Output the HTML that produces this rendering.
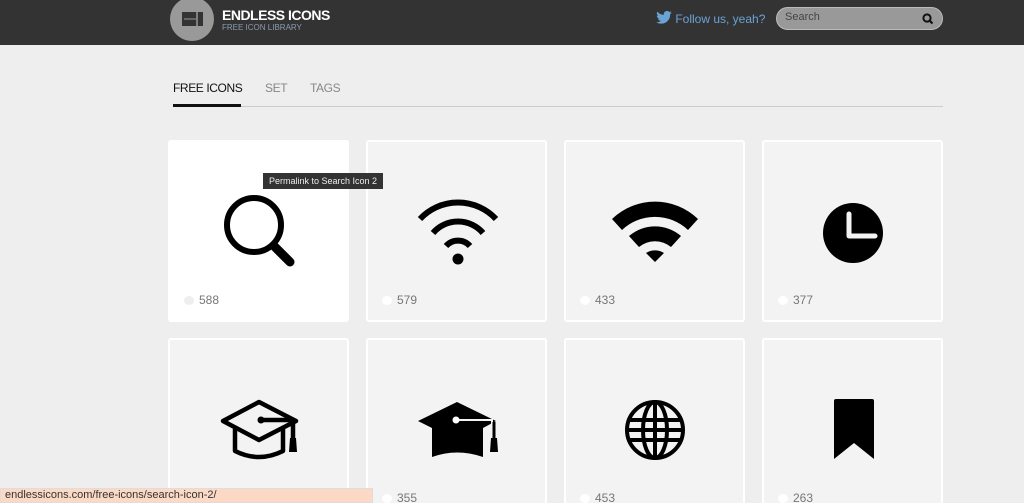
<!DOCTYPE html>
<html><head><meta charset="utf-8"><style>
*{margin:0;padding:0;box-sizing:border-box}
html,body{width:1024px;height:503px;overflow:hidden}
body{background:#eee;font-family:"Liberation Sans",sans-serif;position:relative}
.hdr{position:absolute;left:0;top:0;width:1024px;height:45px;background:#333}
.logo{position:absolute;left:170px;top:-3px;width:44px;height:44px;border-radius:50%;background:#999}
.t1{position:absolute;left:222px;top:7px;color:#fff;font-weight:bold;font-size:14px;letter-spacing:-0.5px}
.t2{position:absolute;left:222px;top:23px;color:#8a9bb0;font-size:8px}
.tw{position:absolute;left:656px;top:11px;color:#6aa3d6;font-size:12px}
.srch{position:absolute;left:776px;top:7px;width:167px;height:23px;border-radius:12px;background:#999;border:1px solid #bbb}
.srch span{position:absolute;left:8px;top:3px;font-size:11px;color:#444}
.tabs{position:absolute;left:173px;top:81px;font-size:12px;letter-spacing:-0.4px}
.tabs span{position:absolute;white-space:nowrap;color:#888}
.line{position:absolute;left:173px;top:106px;width:770px;height:1px;background:#ccc}
.ul{position:absolute;left:173px;top:104px;width:68px;height:3px;background:#111}
.card{position:absolute;width:181px;height:182px;background:#f3f3f3;border:2px solid #fff;border-radius:3px}
.card svg{position:absolute;left:0;top:0}
.cnt{position:absolute;left:14px;top:151px;font-size:12px;color:#777}
.cnt i{display:inline-block;width:10px;height:9px;background:#fff;border-radius:50%;margin-right:5px;vertical-align:-1px}
.tip{position:absolute;left:263px;top:173px;background:#333;color:#eee;font-size:9px;padding:3px 6px}
.st{position:absolute;left:0;top:488px;width:373px;height:15px;background:#fcd9c4;border:1px solid #ddd;font-size:11px;color:#333;padding:0 4px}
</style></head><body>
<div class="hdr">
<div class="logo"><svg width="44" height="44"><rect x="12" y="15" width="21" height="14" fill="#333"/><line x1="14" y1="22" x2="26" y2="22" stroke="#999"/><line x1="27" y1="15" x2="27" y2="29" stroke="#999" stroke-width="1.5"/></svg></div>
<div class="t1">ENDLESS ICONS</div><div class="t2">FREE ICON LIBRARY</div>
<div class="tw"><svg width="16" height="13" viewBox="0 0 24 20" style="vertical-align:-1px"><path d="M24 2.4a10 10 0 0 1-2.8.8A5 5 0 0 0 23.3.4a10 10 0 0 1-3.1 1.2A4.9 4.9 0 0 0 11.8 6 14 14 0 0 1 1.7.9a4.9 4.9 0 0 0 1.5 6.6A4.9 4.9 0 0 1 1 6.9a4.9 4.9 0 0 0 3.9 4.8 5 5 0 0 1-2.2.1 4.9 4.9 0 0 0 4.6 3.4A9.9 9.9 0 0 1 0 17.300 14 14 0 0 0 7.5 19.5c9.1 0 14-7.5 14-14v-.6A10 10 0 0 0 24 2.4z" fill="#6aa3d6"/></svg> Follow us, yeah?</div>
<div class="srch"><span>Search</span><svg width="12" height="12" style="position:absolute;right:8px;top:5px"><circle cx="5" cy="5" r="3.6" fill="none" stroke="#111" stroke-width="2"/><line x1="7.5" y1="7.5" x2="10.5" y2="10.5" stroke="#111" stroke-width="2.2"/></svg></div>
</div>
<div class="tabs"><span style="left:0;color:#111">FREE ICONS</span><span style="left:92px">SET</span><span style="left:137px">TAGS</span></div>
<div class="line"></div><div class="ul"></div>

<div class="card" style="left:168px;top:140px;background:#fff;border-color:#fff"><svg width="181" height="182"><circle cx="84" cy="83" r="27" fill="none" stroke="#000" stroke-width="6"/><line x1="104" y1="104" x2="120" y2="120" stroke="#000" stroke-width="9" stroke-linecap="round"/></svg><div class="cnt"><i style="background:#eee"></i>588</div></div>
<div class="card" style="left:366px;top:140px"><svg width="181" height="182"><g fill="none" stroke="#000" stroke-width="6"><path d="M52 77 A52 52 0 0 1 128 77"/><path d="M65 91 A33 33 0 0 1 115 91"/><path d="M78 104 A16 16 0 0 1 102 104"/></g><circle cx="90" cy="117" r="5.5"/></svg><div class="cnt"><i></i>579</div></div>
<div class="card" style="left:564px;top:140px"><svg width="181" height="182"><path d="M46 77 A62 62 0 0 1 132 77 L122 88 A48 48 0 0 0 56 88 Z M63 94 A40 40 0 0 1 115 94 L105 105 A25 25 0 0 0 73 105 Z M80 111 A17 17 0 0 1 98 111 L89 120 Z"/></svg><div class="cnt"><i></i>433</div></div>
<div class="card" style="left:762px;top:140px"><svg width="181" height="182"><circle cx="89" cy="91" r="30"/><path d="M85 72 V94 H111" fill="none" stroke="#f3f3f3" stroke-width="5" stroke-linecap="round" stroke-linejoin="round"/></svg><div class="cnt"><i></i>377</div></div>

<div class="card" style="left:168px;top:338px"><svg width="181" height="182"><g fill="none" stroke="#000" stroke-width="4.5" stroke-linejoin="round"><path d="M53 81 L89 62 L126 81 L89 100 Z"/><path d="M65 89 V111 Q89 123 113 111 V89"/><path d="M91 80 H123 V100"/></g><circle cx="91" cy="80" r="3.5"/><path d="M120 98 h6 l1 14 h-8z"/></svg></div>
<div class="card" style="left:366px;top:338px"><svg width="181" height="182"><path d="M50 81 L89 62 L128 81 L115 88 V117 Q89 108 64 117 V88 Z"/><path d="M88 80 H124 V100" fill="none" stroke="#f3f3f3" stroke-width="2"/><circle cx="88" cy="80" r="3.5" fill="#fff"/><path d="M126 82 V112" stroke="#000" stroke-width="3"/><path d="M123 98 h6 l1 14 h-8z"/></svg><div class="cnt"><i></i>355</div></div>
<div class="card" style="left:564px;top:338px"><svg width="181" height="182"><g fill="none" stroke="#000" stroke-width="4"><circle cx="89" cy="90" r="28"/><ellipse cx="89" cy="90" rx="12" ry="28"/><line x1="89" y1="62" x2="89" y2="118"/><line x1="63" y1="80" x2="115" y2="80"/><line x1="63" y1="100" x2="115" y2="100"/><line x1="61" y1="90" x2="117" y2="90"/></g></svg><div class="cnt"><i></i>453</div></div>
<div class="card" style="left:762px;top:338px"><svg width="181" height="182"><path d="M70 61 Q70 59 72 59 H108 Q110 59 110 61 V119 L90 103 L70 119 Z"/></svg><div class="cnt"><i></i>263</div></div>

<div class="tip">Permalink to Search Icon 2</div>
<div class="st">endlessicons.com/free-icons/search-icon-2/</div>
</body></html>
